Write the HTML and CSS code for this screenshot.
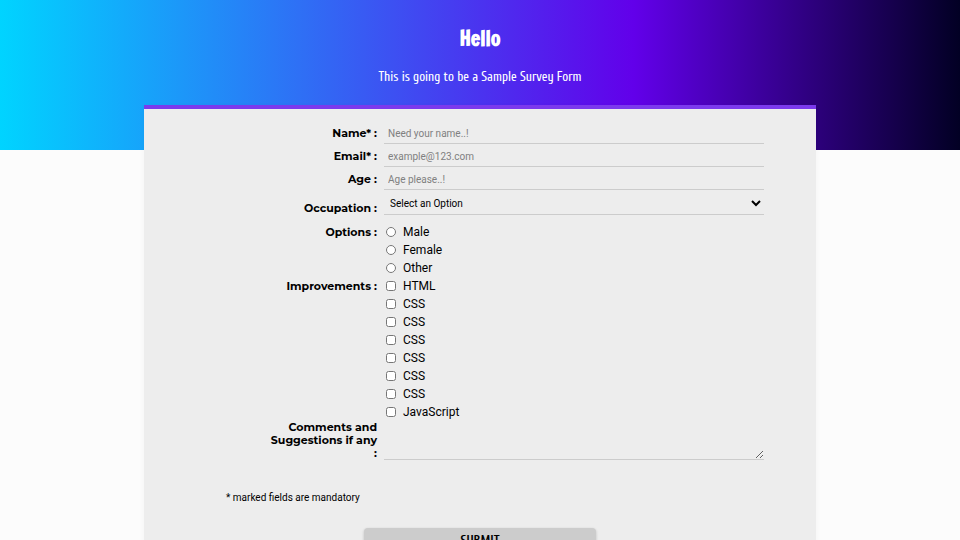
FILE: index.html
```html
<!DOCTYPE html>
<html lang="en">
<head>
<meta charset="utf-8">
<meta name="viewport" content="width=device-width, initial-scale=1">
<title>Survey Form</title>
<link rel="stylesheet" href="styles.css">
</head>
<body>
<header class="intro">
  <h1>Hello</h1>
  <p>This is going to be a Sample Survey Form</p>
</header>
<main class="card">
  <form>
    <div class="row">
      <label class="label" for="name">Name* :</label>
      <input class="field" id="name" type="text" placeholder="Need your name..!">
    </div>
    <div class="row">
      <label class="label" for="email">Email* :</label>
      <input class="field" id="email" type="email" placeholder="example@123.com">
    </div>
    <div class="row">
      <label class="label" for="age">Age :</label>
      <input class="field" id="age" type="text" placeholder="Age please..!">
    </div>
    <div class="row row-select">
      <label class="label" for="job">Occupation :</label>
      <select class="field select" id="job"><option>Select an Option</option></select>
    </div>
    <div class="row row-group" role="radiogroup" aria-labelledby="options">
      <span class="label" id="options">Options :</span>
      <div class="choices">
        <label><input type="radio" name="option">Male</label>
        <label><input type="radio" name="option">Female</label>
        <label><input type="radio" name="option">Other</label>
      </div>
    </div>
    <div class="row row-group" role="group" aria-labelledby="improvements">
      <span class="label" id="improvements">Improvements :</span>
      <div class="choices">
        <label><input type="checkbox">HTML</label>
        <label><input type="checkbox">CSS</label>
        <label><input type="checkbox">CSS</label>
        <label><input type="checkbox">CSS</label>
        <label><input type="checkbox">CSS</label>
        <label><input type="checkbox">CSS</label>
        <label><input type="checkbox">CSS</label>
        <label><input type="checkbox">JavaScript</label>
      </div>
    </div>
    <div class="row row-comments">
      <label class="label" for="comments">Comments and Suggestions if any :</label>
      <textarea class="field comments" id="comments"></textarea>
    </div>
    <p class="note">* marked fields are mandatory</p>
    <button class="submit" type="submit">SUBMIT</button>
  </form>
</main>
</body>
</html>
```

FILE: styles.css
```css
* {
  box-sizing: border-box;
}

body {
  margin: 0;
  background: #fcfcfc linear-gradient(90deg, #00d4ff 0%, #6200ea 66%, #020024 100%) 0 0 / 100% 150px no-repeat;
  font-family: Roboto, "Liberation Sans", sans-serif;
  font-size: 12px;
  color: #000;
}

.intro {
  padding: 27px 0 20px;
  text-align: center;
  color: #fff;
}

.intro h1 {
  margin: 0 0 17px;
  font-family: "Francois One", "Open Sans Condensed", sans-serif;
  font-size: 20px;
  line-height: 24px;
}

.intro p {
  margin: 0;
  font-family: Cuprum, "Roboto Condensed", "Open Sans Condensed", sans-serif;
  font-size: 13px;
  line-height: 17px;
}

.card {
  width: 70%;
  margin: 0 auto;
  padding: 14px 0 24px;
  background: #ededed;
  border-top: 4px solid #7c3aed;
  box-shadow: 0 2px 6px rgba(0, 0, 0, 0.04);
}

.row {
  display: grid;
  grid-template-columns: 109px 1fr;
  column-gap: 7px;
  align-items: center;
  margin: 0 52px 2px 124px;
}

.label {
  text-align: right;
  font-family: Montserrat, Inter, sans-serif;
  font-size: 11px;
  font-weight: 700;
  line-height: 13px;
}

.field {
  width: 100%;
  height: 21px;
  margin: 0;
  padding: 0 4px;
  border: 0;
  border-bottom: 1px solid #ccc;
  border-radius: 0;
  background: transparent;
  color: #000;
  font-family: inherit;
  font-size: 10px;
}

.field::placeholder {
  color: #808080;
}

.row .select {
  height: 23px;
  padding: 0 2px;
}

.row-select {
  align-items: end;
  margin-bottom: 8px;
}

.row-group {
  align-items: start;
  margin-bottom: 0;
}

.row-group .label {
  line-height: 18px;
}

.choices {
  display: grid;
}

.choices label {
  display: flex;
  align-items: center;
  height: 18px;
}

.choices input {
  width: 10px;
  height: 10px;
  margin: 0 7px 0 2px;
}

.row-comments {
  align-items: end;
  margin-bottom: 0;
}

.row .comments {
  display: block;
  height: 38px;
}

.note {
  margin: 30px 82px 22px;
  font-size: 10px;
  line-height: 16px;
}

.submit {
  display: block;
  width: 232px;
  height: 24px;
  margin: 0 auto;
  border: 0;
  border-radius: 4px;
  background: #ccc;
  box-shadow: 0 1px 3px rgba(0, 0, 0, 0.2);
  color: #000;
  font-family: Cuprum, "Open Sans Condensed", sans-serif;
  font-size: 13px;
  font-weight: 700;
}
```
